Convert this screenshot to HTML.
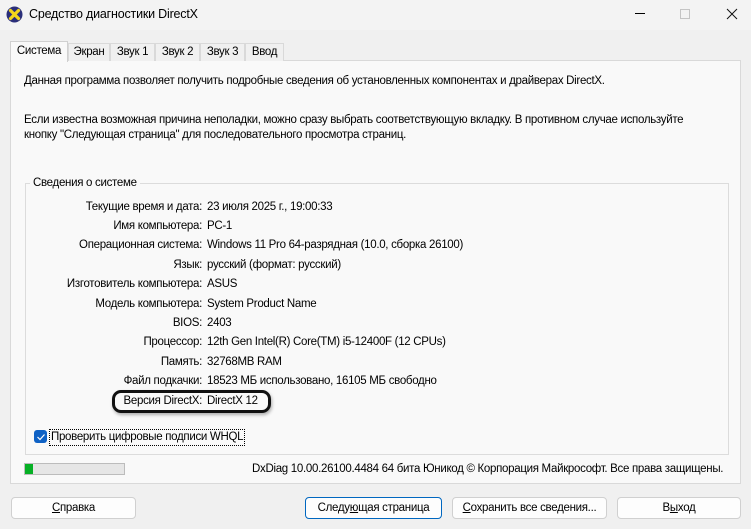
<!DOCTYPE html><html><head><meta charset="utf-8"><style>
*{margin:0;padding:0;box-sizing:border-box}
body{width:751px;height:529px;background:#f0f0f0;font:11.5px "Liberation Sans","Noto Sans CJK SC",sans-serif;letter-spacing:-0.3px;color:#000;position:relative;overflow:hidden}
.a{position:absolute;white-space:nowrap}
.tb{position:absolute;left:0;top:0;width:751px;height:30px;background:#f3f3f3}
.tab{position:absolute;top:43px;height:18px;border:1px solid #d9d9d9;border-bottom:none;background:#f0f0f0;text-align:center;line-height:17px}
.panel{position:absolute;left:10px;top:60px;width:731px;height:424px;border:1px solid #d9d9d9;background:#f9f9f9}
.grp{position:absolute;left:25px;top:183px;width:704px;height:272px;border:1px solid #dcdcdc}
.l{position:absolute;right:549px;text-align:right;white-space:nowrap}
.v{position:absolute;left:207px;white-space:nowrap}
.btn{position:absolute;top:497px;height:22px;border:1px solid #d0d0d0;border-radius:4px;background:#fdfdfd;text-align:center;line-height:21px}
</style></head><body>
<div class="tb"></div>
<svg class="a" style="left:6px;top:6px" width="17" height="17" viewBox="0 0 17 17"><circle cx="8.5" cy="8.5" r="8" fill="#2b2f7a"/><path d="M4.5 4.5L12.5 12.5M12.5 4.5L4.5 12.5" stroke="#f2d51b" stroke-width="3.2" stroke-linecap="round"/></svg>
<div class="a" style="left:29px;top:7px;font-size:12.5px;letter-spacing:-0.2px">Средство диагностики DirectX</div>
<div class="a" style="left:635px;top:13px;width:10px;height:1px;background:#000"></div>
<div class="a" style="left:680px;top:9px;width:10px;height:10px;border:1px solid #c4c4c4"></div>
<svg class="a" style="left:726px;top:8px" width="12" height="12"><path d="M1 1L11 11M11 1L1 11" stroke="#111" stroke-width="1"/></svg>
<div class="panel"></div>
<div class="tab" style="left:10px;top:41px;height:21px;width:58px;background:#f9f9f9;border-color:#d0d0d0;line-height:19px">Система</div>
<div class="tab" style="left:68px;width:42px">Экран</div>
<div class="tab" style="left:110px;width:45px">Звук 1</div>
<div class="tab" style="left:155px;width:45px">Звук 2</div>
<div class="tab" style="left:200px;width:45px">Звук 3</div>
<div class="tab" style="left:245px;width:39px">Ввод</div>
<div class="a" style="left:24px;top:75px">Данная программа позволяет получить подробные сведения об установленных компонентах и драйверах DirectX.</div>
<div class="a" style="left:24px;top:114px">Если известна возможная причина неполадки, можно сразу выбрать соответствующую вкладку. В противном случае используйте</div>
<div class="a" style="left:24px;top:129px">кнопку "Следующая страница" для последовательного просмотра страниц.</div>
<div class="grp"></div>
<div class="a" style="left:30px;top:177px;background:#f9f9f9;padding:0 3px">Сведения о системе</div>
<div class="l" style="top:201px">Текущие время и дата:</div><div class="v" style="top:201px">23 июля 2025 г., 19:00:33</div>
<div class="l" style="top:220px">Имя компьютера:</div><div class="v" style="top:220px">PC-1</div>
<div class="l" style="top:239px">Операционная система:</div><div class="v" style="top:239px">Windows 11 Pro 64-разрядная (10.0, сборка 26100)</div>
<div class="l" style="top:259px">Язык:</div><div class="v" style="top:259px">русский (формат: русский)</div>
<div class="l" style="top:278px">Изготовитель компьютера:</div><div class="v" style="top:278px">ASUS</div>
<div class="l" style="top:298px">Модель компьютера:</div><div class="v" style="top:298px">System Product Name</div>
<div class="l" style="top:317px">BIOS:</div><div class="v" style="top:317px">2403</div>
<div class="l" style="top:336px">Процессор:</div><div class="v" style="top:336px">12th Gen Intel(R) Core(TM) i5-12400F (12 CPUs)</div>
<div class="l" style="top:356px">Память:</div><div class="v" style="top:356px">32768MB RAM</div>
<div class="l" style="top:375px">Файл подкачки:</div><div class="v" style="top:375px">18523 МБ использовано, 16105 МБ свободно</div>
<div class="a" style="left:112px;top:390px;width:159px;height:23px;border:3px solid #111;border-radius:9px;box-shadow:1px 2px 3px rgba(0,0,0,.3)"></div>
<div class="l" style="top:395px">Версия DirectX:</div><div class="v" style="top:395px">DirectX 12</div>
<div class="a" style="left:34px;top:430px;width:13px;height:13px;background:#0f62c5;border-radius:3px"></div>
<svg class="a" style="left:36px;top:432px" width="10" height="10"><path d="M1.5 5L4 7.5L8.5 2.5" stroke="#fff" stroke-width="1.2" fill="none"/></svg>
<div class="a" style="left:49px;top:429px;border:1px dotted #000;padding:0 1px;line-height:15px">Проверить цифровые подписи WHQL</div>
<div class="a" style="left:24px;top:463px;width:101px;height:12px;border:1px solid #bcbcbc;background:#e6e6e6"></div>
<div class="a" style="left:25px;top:464px;width:8px;height:10px;background:#06b025"></div>
<div class="a" style="left:252px;top:463px">DxDiag 10.00.26100.4484 64 бита Юникод © Корпорация Майкрософт. Все права защищены.</div>
<div class="btn" style="left:11px;width:125px"><u>С</u>правка</div>
<div class="btn" style="left:305px;width:137px;border-color:#0067c0">Следу<u>ю</u>щая страница</div>
<div class="btn" style="left:452px;width:155px"><u>С</u>охранить все сведения...</div>
<div class="btn" style="left:617px;width:124px">В<u>ы</u>ход</div>
</body></html>
